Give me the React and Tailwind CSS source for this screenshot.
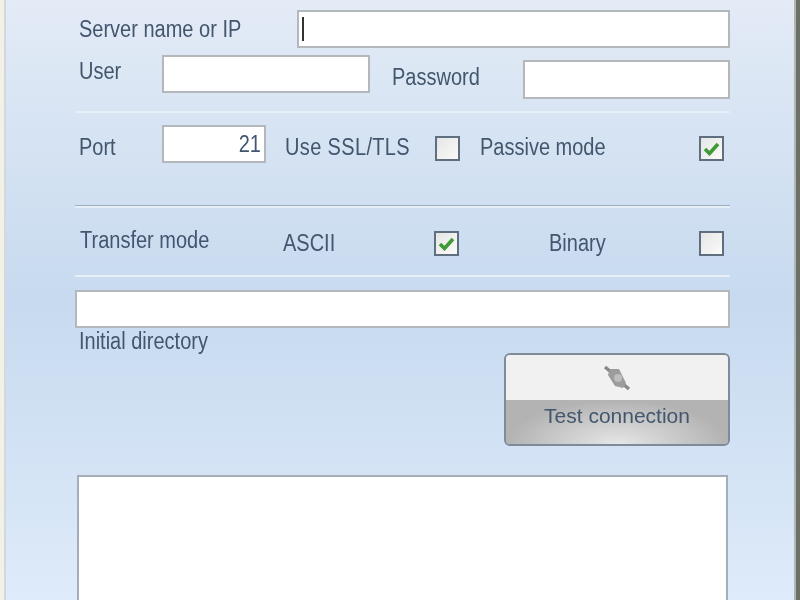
const LABEL = "text-[20px] leading-[26px] scale-y-[1.16] text-[#42566e] whitespace-nowrap";

function Field({ className = "", children }) {
  return (
    <div
      className={`h-[38px] bg-white border-2 border-[#b4b8bc] flex items-center ${className}`}
    >
      {children}
    </div>
  );
}

function Check({ checked, className = "" }) {
  return (
    <div
      className={`w-[25px] h-[25px] flex-none border-2 border-[#5f6f80] bg-gradient-to-br from-[#e4e6e6] to-[#fbfbf8] flex items-center justify-center ${className}`}
    >
      {checked && (
        <svg width="17" height="15" viewBox="0 0 17 15">
          <path
            d="M2 8 L6.5 12.5 L15 3"
            fill="none"
            stroke="#3f9a35"
            strokeWidth="3.6"
          />
        </svg>
      )}
    </div>
  );
}

function Divider({ className = "" }) {
  return <div className={`h-[2px] bg-[#e6eff8] ${className}`} />;
}

function PlugIcon() {
  return (
    <svg width="32" height="32" viewBox="0 0 32 32">
      <path d="M4 5 L10 10 M22 22 L28 27" stroke="#8a8a8a" strokeWidth="3.5" />
      <path d="M9 7 L18 7 L25 21 L22 26 L14 24 L7 13 Z" fill="#9c9c9c" />
      <circle cx="17" cy="16" r="4" fill="#bdbdbd" />
    </svg>
  );
}

export default function App() {
  return (
    <div className="w-[800px] h-[600px] overflow-hidden">
      <div className="w-[800px] h-[600px] flex bg-[#f2f1e6] blur-[0.5px] font-['Liberation_Sans',sans-serif]">
        <div className="w-[4px] flex-none" />
        <div className="w-[2px] flex-none bg-[#d6d6de]" />
        <div className="flex-1 h-[600px] bg-gradient-to-b from-[#e3ebf6] via-[#c7daef] via-50% to-[#deebfa] pl-[69px] pr-[64px] pt-[10px]">
          {/* Server */}
          <div className="flex">
            <div className={`${LABEL} ml-[4px] w-[218px] pt-[6px]`}>
              Server name or IP
            </div>
            <Field className="flex-1 pl-[3px]">
              <div className="w-[2px] h-[24px] bg-[#333]" />
            </Field>
          </div>

          {/* User / password */}
          <div className="flex mt-[7px]">
            <div className={`${LABEL} ml-[4px] w-[83px] pt-[4px]`}>User</div>
            <Field className="w-[208px]" />
            <div className={`${LABEL} ml-[22px] w-[131px] pt-[9px]`}>
              Password
            </div>
            <Field className="flex-1 mt-[5px] h-[39px]" />
          </div>

          <Divider className="mt-[12px]" />

          {/* Port row */}
          <div className="flex items-center mt-[12px]">
            <div className={`${LABEL} ml-[4px] w-[83px] mt-[6px]`}>Port</div>
            <Field className="w-[104px] justify-end pr-[3px]">
              <span className="text-[20px] scale-y-[1.16] text-[#42566e]">
                21
              </span>
            </Field>
            <div
              className={`${LABEL} ml-[19px] w-[150px] mt-[6px] tracking-[0.35px]`}
            >
              Use SSL/TLS
            </div>
            <Check className="mt-[8px]" />
            <div className={`${LABEL} ml-[20px] w-[219px] mt-[6px]`}>
              Passive mode
            </div>
            <Check checked className="mt-[8px]" />
          </div>

          <div className="mt-[42px] h-[1px] bg-[#9db0c3]" />
          <Divider />

          {/* Transfer mode */}
          <div className="flex items-center mt-[22px] h-[26px]">
            <div className={`${LABEL} ml-[5px] w-[203px] mb-[6px]`}>
              Transfer mode
            </div>
            <div className={`${LABEL} w-[151px]`}>ASCII</div>
            <Check checked />
            <div className={`${LABEL} ml-[90px] w-[150px]`}>Binary</div>
            <Check />
          </div>

          <Divider className="mt-[19px]" />

          {/* Initial directory */}
          <Field className="mt-[13px]" />
          <div className={`${LABEL} ml-[4px]`}>Initial directory</div>

          <div className="flex justify-end mt-[-1px]">
            <div className="w-[226px] h-[93px] rounded-[6px] border-2 border-[#7f8b98] overflow-hidden flex flex-col">
              <div className="h-[45px] bg-[#f1f1f1] flex items-center justify-center">
                <PlugIcon />
              </div>
              <div className="flex-1 bg-[radial-gradient(ellipse_at_50%_100%,#e6e6e6,#b3b3b3_70%)] text-center text-[21px] leading-[32px] scale-y-100 text-[#42566e]">
                Test connection
              </div>
            </div>
          </div>

          {/* Log box */}
          <div className="mt-[29px] mx-[2px] h-[140px] bg-white border-2 border-[#a5aeb8]" />
        </div>
        <div className="w-[2px] flex-none bg-[#b4b6b4]" />
        <div className="w-[4px] flex-none bg-[#6b7068]" />
      </div>
    </div>
  );
}
